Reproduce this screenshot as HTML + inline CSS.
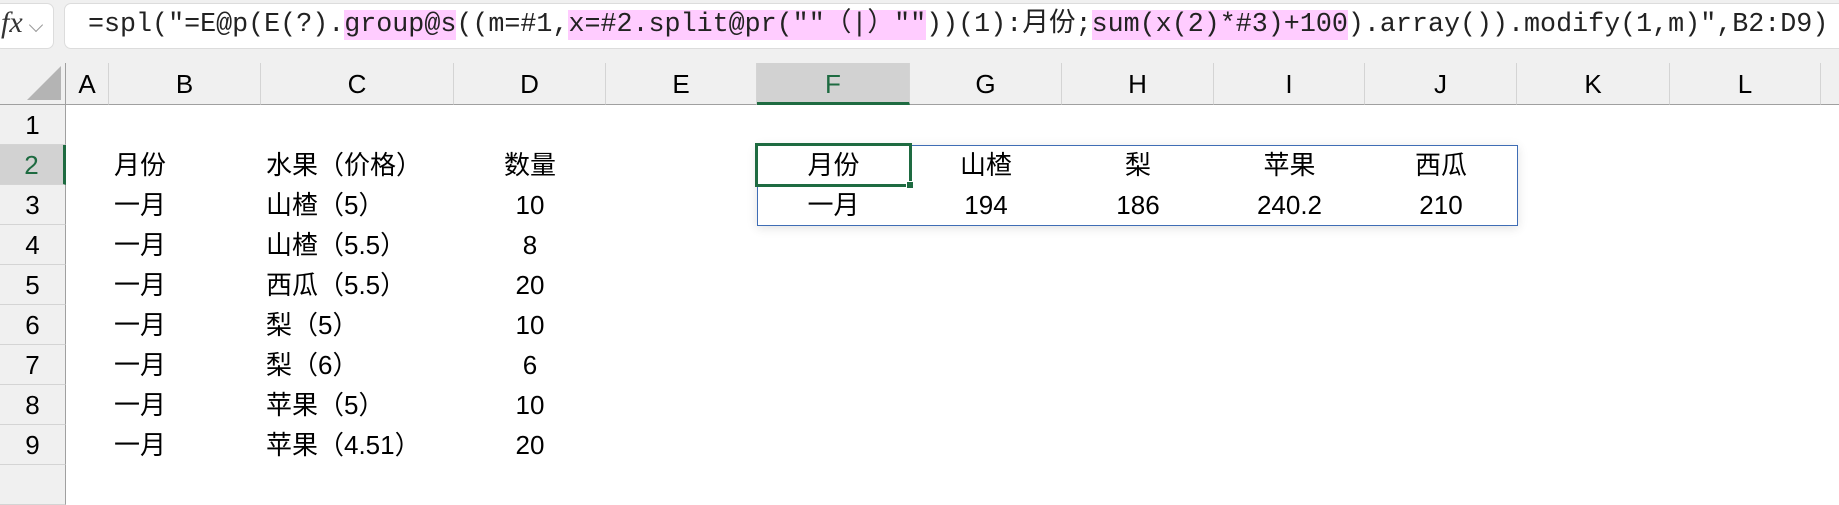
<!DOCTYPE html>
<html><head><meta charset="utf-8"><style>
*{margin:0;padding:0;box-sizing:border-box}
body{width:1839px;height:469px;background:#fff;position:relative;overflow:hidden;font-family:"Liberation Sans","Noto Sans CJK SC",sans-serif;color:#000}
.top{position:absolute;left:0;top:0;width:1839px;height:63px;background:#f0f0f0}
.fxb{position:absolute;left:-6px;top:3px;width:60px;height:46px;background:#fff;border:1px solid #dcdcdc;border-radius:7px}
.fxb i{position:absolute;left:6px;top:2px;font-family:"Liberation Serif",serif;font-size:30px;color:#333}
.fxb b{position:absolute;left:36px;top:16px;width:10px;height:10px;border-right:1.5px solid #999;border-bottom:1.5px solid #999;transform:rotate(45deg)}
.fbox{position:absolute;left:64px;top:3px;width:1790px;height:46px;background:#fff;border:1px solid #dcdcdc;border-radius:7px}
.ftxt{position:absolute;left:88px;top:4px;height:43px;line-height:43px;font-family:"Liberation Mono","Noto Sans CJK SC",monospace;font-size:26.7px;white-space:pre;color:#222}
.ftxt span{background:#ffccff}
.hdr{position:absolute;top:63px;height:42px;background:#f0f0f0;border-right:1px solid #d4d4d4;border-bottom:1px solid #a0a0a0;text-align:center;line-height:42px;font-size:26px;color:#000}
.rh{position:absolute;left:0;width:66px;height:40px;background:#f0f0f0;border-bottom:1px solid #d4d4d4;border-right:1px solid #a0a0a0;text-align:center;line-height:40px;font-size:26px}
.c{position:absolute;height:40px;line-height:40px;font-size:26px;white-space:nowrap}
</style></head><body>
<div class="top"></div>
<div class="fxb"><i>fx</i><b></b></div>
<div class="fbox"></div>
<div class="ftxt">=spl("=E@p(E(?).<span>group@s</span>((m=#1,<span>x=#2.split@pr(""（|）""</span>))(1):月份;<span>sum(x(2)*#3)+100</span>).array()).modify(1,m)",B2:D9)</div>

<div class="hdr" style="left:0;width:66px;border-right:1px solid #a0a0a0"><div style="position:absolute;right:4px;bottom:4px;width:0;height:0;border-left:34px solid transparent;border-bottom:34px solid #b4b4b4"></div></div>
<div class="hdr" style="left:66px;width:43px">A</div>
<div class="hdr" style="left:109px;width:152px">B</div>
<div class="hdr" style="left:261px;width:193px">C</div>
<div class="hdr" style="left:454px;width:152px">D</div>
<div class="hdr" style="left:606px;width:151px">E</div>
<div class="hdr" style="left:757px;width:153px;background:#d2d2d2;color:#1e6b41;border-bottom:3px solid #1e6b41">F</div>
<div class="hdr" style="left:910px;width:152px">G</div>
<div class="hdr" style="left:1062px;width:152px">H</div>
<div class="hdr" style="left:1214px;width:151px">I</div>
<div class="hdr" style="left:1365px;width:152px">J</div>
<div class="hdr" style="left:1517px;width:153px">K</div>
<div class="hdr" style="left:1670px;width:151px">L</div>
<div class="hdr" style="left:1821px;width:30px"></div>

<div class="rh" style="top:105px">1</div>
<div class="rh" style="top:145px;background:#d2d2d2;color:#1e6b41;border-right:3px solid #1e6b41">2</div>
<div class="rh" style="top:185px">3</div>
<div class="rh" style="top:225px">4</div>
<div class="rh" style="top:265px">5</div>
<div class="rh" style="top:305px">6</div>
<div class="rh" style="top:345px">7</div>
<div class="rh" style="top:385px">8</div>
<div class="rh" style="top:425px">9</div>
<div class="rh" style="top:465px"></div>

<div class="c" style="left:114px;top:145px">月份</div>
<div class="c" style="left:266px;top:145px">水果（价格）</div>
<div class="c" style="left:454px;width:152px;text-align:center;top:145px">数量</div>

<div class="c" style="left:114px;top:185px">一月</div><div class="c" style="left:266px;top:185px">山楂（5）</div><div class="c" style="left:454px;width:152px;text-align:center;top:185px">10</div>
<div class="c" style="left:114px;top:225px">一月</div><div class="c" style="left:266px;top:225px">山楂（5.5）</div><div class="c" style="left:454px;width:152px;text-align:center;top:225px">8</div>
<div class="c" style="left:114px;top:265px">一月</div><div class="c" style="left:266px;top:265px">西瓜（5.5）</div><div class="c" style="left:454px;width:152px;text-align:center;top:265px">20</div>
<div class="c" style="left:114px;top:305px">一月</div><div class="c" style="left:266px;top:305px">梨（5）</div><div class="c" style="left:454px;width:152px;text-align:center;top:305px">10</div>
<div class="c" style="left:114px;top:345px">一月</div><div class="c" style="left:266px;top:345px">梨（6）</div><div class="c" style="left:454px;width:152px;text-align:center;top:345px">6</div>
<div class="c" style="left:114px;top:385px">一月</div><div class="c" style="left:266px;top:385px">苹果（5）</div><div class="c" style="left:454px;width:152px;text-align:center;top:385px">10</div>
<div class="c" style="left:114px;top:425px">一月</div><div class="c" style="left:266px;top:425px">苹果（4.51）</div><div class="c" style="left:454px;width:152px;text-align:center;top:425px">20</div>

<div style="position:absolute;left:757px;top:145px;width:761px;height:81px;border:1.5px solid #3f6db5;box-shadow:0 2px 10px rgba(0,0,0,0.12)"></div>
<div class="c" style="left:757px;width:153px;text-align:center;top:145px">月份</div>
<div class="c" style="left:910px;width:152px;text-align:center;top:145px">山楂</div>
<div class="c" style="left:1062px;width:152px;text-align:center;top:145px">梨</div>
<div class="c" style="left:1214px;width:151px;text-align:center;top:145px">苹果</div>
<div class="c" style="left:1365px;width:152px;text-align:center;top:145px">西瓜</div>
<div class="c" style="left:757px;width:153px;text-align:center;top:185px">一月</div>
<div class="c" style="left:910px;width:152px;text-align:center;top:185px">194</div>
<div class="c" style="left:1062px;width:152px;text-align:center;top:185px">186</div>
<div class="c" style="left:1214px;width:151px;text-align:center;top:185px">240.2</div>
<div class="c" style="left:1365px;width:152px;text-align:center;top:185px">210</div>
<div style="position:absolute;left:755px;top:143px;width:157px;height:44px;border:3px solid #1e6b41"></div>
<div style="position:absolute;left:906px;top:181px;width:8px;height:8px;background:#1e6b41;border:1px solid #fff"></div>
</body></html>
